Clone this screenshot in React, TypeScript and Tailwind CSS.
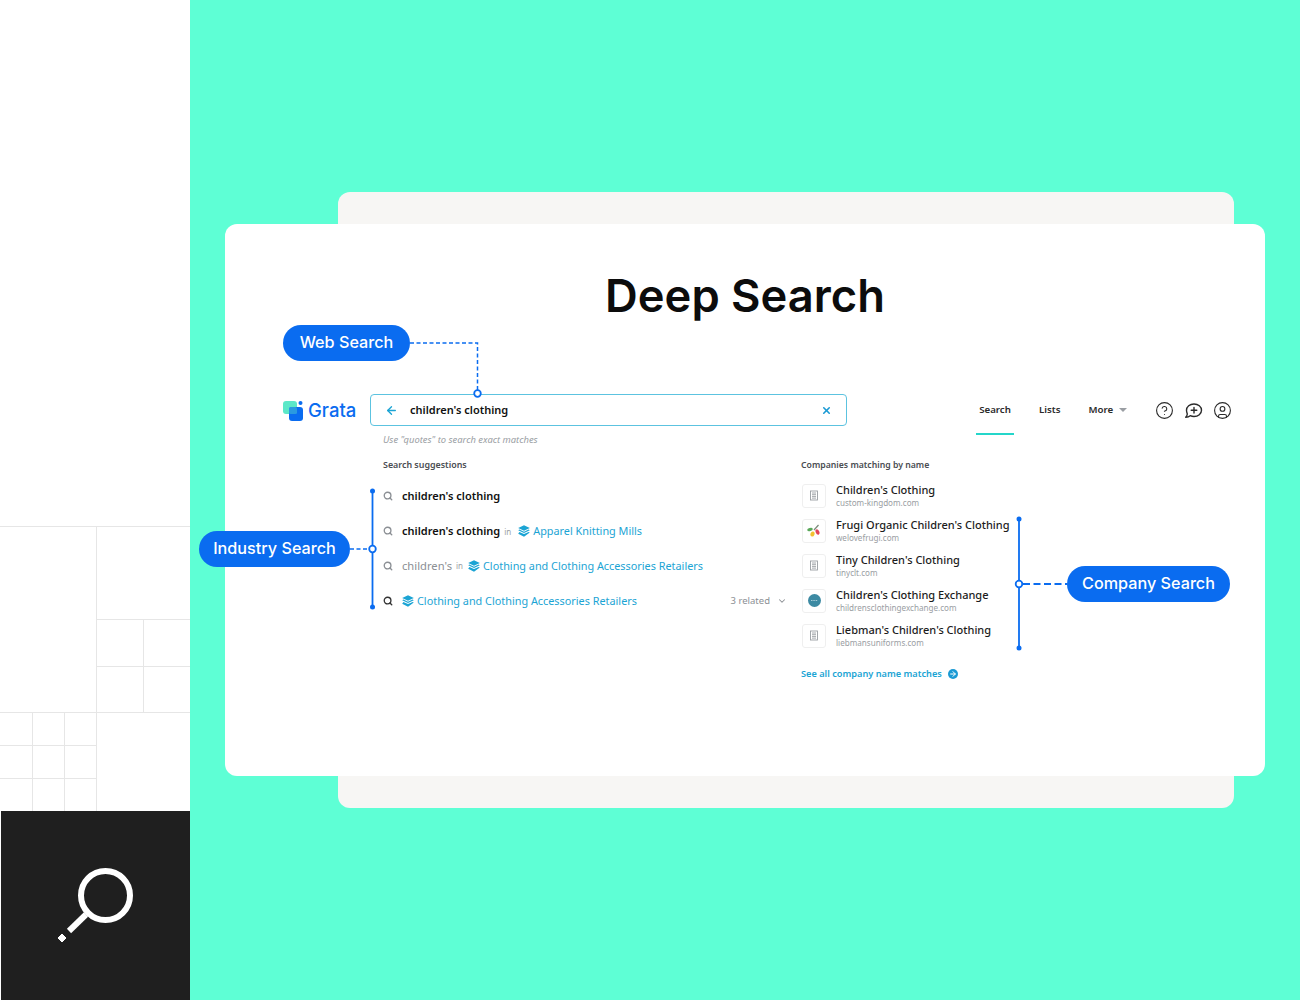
import React from 'react';
import { ArrowLeft, ChevronDown, CircleHelp, CircleUser, Search, X, ArrowRight } from 'lucide-react';

const uiFont = 'font-["Noto_Sans",sans-serif]';
const headFont = 'font-["Inter",sans-serif]';

// 업종 아이콘 (겹친 레이어)
const LayersIcon = () => (
  <svg width="12" height="12" viewBox="0 0 12 12" className="shrink-0">
    <path d="M6 .2 11.800 3 6 5.800.2 3z" fill="#1ba4d4" />
    <path d="M1.400 4.600 6 6.800l4.600-2.200 1.200.7L6 8.100.2 5.300z" fill="#1ba4d4" />
    <path d="M1.400 6.900 6 9.100l4.600-2.200 1.200.7L6 11.800.2 8.800z" fill="#1ba4d4" />
  </svg>
);

const BuildingIcon = () => (
  <svg width="10" height="11" viewBox="0 0 10 11" fill="none" stroke="#9a9ea3" strokeWidth="0.9">
    <rect x="1.500" y="1" width="7" height="9" />
    <path d="M3 3h4M3 4.700h4M3 6.400h4M3 8.100h4" />
  </svg>
);

const FrugiLogo = () => (
  <svg width="14" height="13" viewBox="0 0 14 13">
    <path d="M7 6 11.500 1" stroke="#7a8a78" strokeWidth="1.200" fill="none" />
    <ellipse cx="3" cy="5.500" rx="2.800" ry="1.600" fill="#5aa85a" transform="rotate(-15 3 5.500)" />
    <ellipse cx="10.500" cy="8" rx="1.800" ry="2.800" fill="#e2455a" transform="rotate(-30 10.500 8)" />
    <ellipse cx="5.500" cy="10" rx="2" ry="2.600" fill="#f2c230" transform="rotate(20 5.500 10)" />
  </svg>
);

const ExchangeLogo = () => (
  <svg width="13" height="13" viewBox="0 0 13 13">
    <circle cx="6.500" cy="6.500" r="6.500" fill="#3d8aa3" />
    <path d="M3 6.500h7" stroke="#a9cdd8" strokeWidth="1.200" strokeDasharray="1.500 0.800" />
  </svg>
);

const ChatPlusIcon = () => (
  <svg width="19" height="19" viewBox="0 0 19 19" fill="none" stroke="#2b2b2b" strokeWidth="1.400" strokeLinecap="round" strokeLinejoin="round">
    <path d="M10 3c4.200 0 7.500 2.800 7.500 6.300S14.200 15.500 10 15.500c-1.400 0-2.700-.3-3.800-.8-1 .9-2.500 1.500-4.500 1.600 1-1 1.500-2.100 1.600-3.300C2.900 11.900 2.500 10.700 2.500 9.300 2.500 5.800 5.800 3 10 3z" />
    <path d="M10 6.500v5.500M7.200 9.300h5.600" />
  </svg>
);

const GrataLogo = () => (
  <div className="flex items-center gap-[4px]">
    <svg width="21" height="21" viewBox="0 0 21 21">
      <rect x="0" y="1" width="14" height="13" rx="3" fill="#5ce8c8" />
      <rect x="6" y="7" width="14" height="14" rx="3" fill="#0a6cf0" />
      <rect x="6" y="7" width="8" height="7" rx="1.500" fill="#2a9ae0" />
      <circle cx="17.500" cy="3" r="2" fill="#0a6cf0" />
    </svg>
    <span className={`${headFont} text-[18.500px] font-medium leading-none text-[#0a6cf0]`}>Grata</span>
  </div>
);

const Industry = ({ children }: { children: React.ReactNode }) => (
  <span className="flex items-center gap-[3px] text-[10.850px] text-[#1ba4d4]">
    <LayersIcon />
    <span>{children}</span>
  </span>
);

const companies = [
  { name: "Children's Clothing", domain: 'custom-kingdom.com', logo: <BuildingIcon /> },
  { name: "Frugi Organic Children's Clothing", domain: 'welovefrugi.com', logo: <FrugiLogo /> },
  { name: "Tiny Children's Clothing", domain: 'tinyclt.com', logo: <BuildingIcon /> },
  { name: "Children's Clothing Exchange", domain: 'childrensclothingexchange.com', logo: <ExchangeLogo /> },
  { name: "Liebman's Children's Clothing", domain: 'liebmansuniforms.com', logo: <BuildingIcon /> },
];

const Pill = ({ className, children }: { className: string; children: React.ReactNode }) => (
  <div
    className={`${headFont} absolute flex h-[36px] items-center justify-center rounded-full bg-[#0a6cf0] pb-[2px] text-[16.200px] font-medium text-white ${className}`}
  >
    {children}
  </div>
);

const Row = ({ dark, children }: { dark?: boolean; children: React.ReactNode }) => (
  <div className="flex h-[35px] items-center">
    <Search size={10} strokeWidth={3.200} className={`mb-[1px] mr-[9px] shrink-0 ${dark ? 'text-[#333]' : 'text-[#8b8f94]'}`} />
    <div className="flex flex-1 items-center">{children}</div>
  </div>
);

export default function App() {
  return (
    <div className={`flex h-[1000px] w-[1300px] overflow-hidden bg-[#5effd5] ${uiFont}`}>
      {/* 왼쪽 장식 컬럼 */}
      <div className="flex w-[190px] shrink-0 flex-col bg-white">
        <div className="h-[526px]" />
        <svg width="190" height="285" viewBox="0 526 190 285" fill="none" stroke="#e6e6e6" strokeWidth="1">
          <path d="M0 526.500h190M96.500 526v285M96 619.500h94M96 666.500h94M143.500 619v93M0 712.500h190M32.500 712v99M64.500 712v99M0 745.500h96M0 778.500h96" />
        </svg>
        <div className="ml-[1px] h-[189px] bg-[#1f1f1f]">
          <svg width="189" height="189" viewBox="1 811 189 189" fill="none" stroke="white">
            <circle cx="105.500" cy="895.500" r="24.500" strokeWidth="6" />
            <path d="M86 914.500 69 931" strokeWidth="6" />
            <path d="M62 934l4 4-4 4-4-4z" fill="white" strokeWidth="1" />
          </svg>
        </div>
      </div>

      {/* 카드 영역 */}
      <div className="flex-1 pl-[148px] pt-[192px]">
        <div className="w-[896px] rounded-[12px] bg-[#f7f6f4] py-[32px]">
          <div className="relative ml-[-113px] mr-[-31px] h-[552px] rounded-[12px] bg-white pl-[58px] pr-[33px] pt-[44px]">
            <h1 className={`${headFont} h-[56px] pr-[25px] text-center text-[45.300px] font-semibold leading-[56px] text-[#0c0c0c]`}>
              Deep Search
            </h1>

            {/* 헤더 */}
            <div className="mt-[70px] flex h-[32px] items-center">
              <div className="w-[87px] shrink-0">
                <GrataLogo />
              </div>
              <div className="flex h-[32px] w-[477px] shrink-0 items-center rounded-[4px] border border-[#5cc3e0] pl-[14px] pr-[14px]">
                <ArrowLeft size={13} strokeWidth={2.500} className="text-[#1ba4d4]" />
                <span className="ml-[12px] flex-1 text-[11px] font-semibold text-[#111]">children's clothing</span>
                <X size={11} strokeWidth={3.500} className="text-[#1b9ad4]" />
              </div>
              <div className="ml-[129px] flex items-center text-[9.700px] font-semibold text-[#2b2b2b]">
                <div className="relative w-[38px] text-center">
                  Search
                  <div className="absolute -bottom-[18px] left-0 h-[2px] w-[38px] bg-[#24d6ca]" />
                </div>
                <span className="ml-[25px]">Lists</span>
                <span className="ml-[28px]">More</span>
                <svg width="8" height="4" viewBox="0 0 8 4" className="ml-[6px]">
                  <path d="M0 0h8L4 4z" fill="#9a9ea3" />
                </svg>
              </div>
              <div className="ml-auto flex items-center gap-[10px] text-[#2b2b2b]">
                <CircleHelp size={19} strokeWidth={1.400} />
                <ChatPlusIcon />
                <CircleUser size={19} strokeWidth={1.400} />
              </div>
            </div>

            <p className="ml-[100px] mt-[7px] h-[14px] text-[9.400px] italic leading-[14px] text-[#9a9ea3]">
              Use "quotes" to search exact matches
            </p>

            {/* 결과 두 컬럼 */}
            <div className="mt-[11px] flex pl-[100px]">
              <div className="w-[404px] shrink-0">
                <h2 className="h-[14px] text-[8.900px] font-semibold leading-[14px] text-[#4a4d52]">Search suggestions</h2>
                <div className="mt-[7px]">
                  <Row>
                    <span className="text-[11px] font-semibold text-[#111]">children's clothing</span>
                  </Row>
                  <Row>
                    <span className="text-[11px] font-semibold text-[#111]">children's clothing</span>
                    <span className="ml-[4px] mr-[7px] text-[8px] text-[#9a9ea3]">in</span>
                    <Industry>Apparel Knitting Mills</Industry>
                  </Row>
                  <Row>
                    <span className="text-[11.200px] text-[#8b8f94]">children's</span>
                    <span className="ml-[4px] mr-[5px] text-[8px] text-[#9a9ea3]">in</span>
                    <Industry>Clothing and Clothing Accessories Retailers</Industry>
                  </Row>
                  <Row dark>
                    <Industry>Clothing and Clothing Accessories Retailers</Industry>
                    <span className="ml-auto text-[9.500px] text-[#8b8f94]">3 related</span>
                    <ChevronDown size={10} strokeWidth={2.500} className="ml-[7px] text-[#8b8f94]" />
                  </Row>
                </div>
              </div>

              <div className="ml-[14px] flex-1">
                <h2 className="h-[14px] text-[8.700px] font-semibold leading-[14px] text-[#4a4d52]">
                  Companies matching by name
                </h2>
                <div className="mt-[6px]">
                  {companies.map((c) => (
                    <div key={c.name} className="flex h-[35px] items-center">
                      <div className="ml-[1px] flex h-[24px] w-[24px] shrink-0 items-center justify-center rounded-[3px] border border-[#efefef]">
                        {c.logo}
                      </div>
                      <div className="ml-[10px]">
                        <div className="text-[11px] font-medium leading-[14px] text-[#1c1c1c]">{c.name}</div>
                        <div className="text-[8.100px] leading-[11px] text-[#9a9ea3]">{c.domain}</div>
                      </div>
                    </div>
                  ))}
                </div>
                <div className="mt-[14px] flex items-center text-[9.200px] font-semibold text-[#1ba4d4]">
                  See all company name matches
                  <span className="ml-[6px] flex h-[10px] w-[10px] items-center justify-center rounded-full bg-[#1b9ad4]">
                    <ArrowRight size={8} strokeWidth={3} className="text-white" />
                  </span>
                </div>
              </div>
            </div>

            {/* 콜아웃 연결선 */}
            <svg
              width="1040"
              height="552"
              viewBox="225 224 1040 552"
              fill="none"
              stroke="#0a6cf0"
              className="absolute left-0 top-0"
            >
              <path d="M410 343H477.500V390" strokeWidth="1.500" strokeDasharray="4 2.500" />
              <circle cx="477.500" cy="393.500" r="3.300" fill="white" strokeWidth="1.800" />
              <path d="M372.500 491V607" strokeWidth="1.800" />
              <circle cx="372.500" cy="491" r="2.500" fill="#0a6cf0" stroke="none" />
              <circle cx="372.500" cy="607" r="2.500" fill="#0a6cf0" stroke="none" />
              <path d="M350 549H369" strokeWidth="1.500" strokeDasharray="4 2.500" />
              <circle cx="372.500" cy="549" r="3.300" fill="white" strokeWidth="1.800" />
              <path d="M1019 519V648" strokeWidth="1.800" />
              <circle cx="1019" cy="519" r="2.500" fill="#0a6cf0" stroke="none" />
              <circle cx="1019" cy="648" r="2.500" fill="#0a6cf0" stroke="none" />
              <path d="M1023 584H1067" strokeWidth="1.800" strokeDasharray="7 3.500" />
              <circle cx="1019" cy="584" r="3.300" fill="white" strokeWidth="1.800" />
            </svg>

            <Pill className="left-[58px] top-[101px] w-[127px]">Web Search</Pill>
            <Pill className="left-[-26px] top-[307px] w-[151px]">Industry Search</Pill>
            <Pill className="left-[842px] top-[342px] w-[163px]">Company Search</Pill>
          </div>
        </div>
      </div>
    </div>
  );
}
